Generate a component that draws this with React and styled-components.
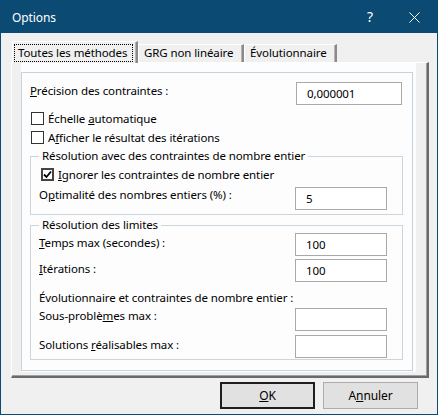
import React from "react";
import styled, { createGlobalStyle } from "styled-components";

const GlobalStyle = createGlobalStyle`
  html, body {
    margin: 0;
    padding: 0;
    background: #ffffff;
  }
  body {
    font-family: "Segoe UI", "Noto Sans", sans-serif;
    font-size: 11.5px;
    letter-spacing: -0.1px;
    color: #000;
  }
`;

const Window = styled.div`
  box-sizing: border-box;
  width: 438px;
  height: 415px;
  border: 1px solid #0b4a73;
  background: #f0f0f0;
  display: flex;
  flex-direction: column;
`;

const TitleBar = styled.div`
  height: 32px;
  background: #0b4a73;
  color: #fff;
  display: flex;
  align-items: center;
  padding-left: 11px;
  font-size: 12px;
  line-height: 16px;
`;

const Title = styled.span`
  flex: 1;
  margin-top: 1px;
`;

const TitleButton = styled.div`
  width: 46px;
  height: 32px;
  display: flex;
  align-items: center;
  justify-content: center;
  font-size: 14px;
  padding-left: ${(p) => p.$shift || 0}px;
  box-sizing: border-box;
`;

const Body = styled.div`
  padding: 8px 8px 0 10px;
  display: flex;
  flex-direction: column;
`;

const TabStrip = styled.div`
  display: flex;
  align-items: flex-end;
  height: 21px;
  padding-left: 1px;
`;

const Tab = styled.div`
  box-sizing: border-box;
  position: relative;
  z-index: ${(p) => (p.$active ? 1 : 0)};
  width: ${(p) => p.$w}px;
  height: ${(p) => (p.$active ? 22 : 18)}px;
  margin-bottom: ${(p) => (p.$active ? -1 : 0)}px;
  background: #f0f0f0;
  border-top: 1px solid #fff;
  border-left: 1px solid #fff;
  border-right: 2px solid #8a8a8a;
  box-shadow: inset -1px 0 0 #b4b4b4;
  padding: ${(p) => (p.$active ? "3px 0 0 2px" : "0 0 0 5px")};
  line-height: 16px;
  white-space: nowrap;
`;

const FocusLabel = styled.span`
  display: inline-block;
  outline: 1px dotted #000;
  outline-offset: 0;
  padding: 0 5px 0 3px;
  line-height: 16px;
`;

const Panel = styled.div`
  box-sizing: border-box;
  height: 316px;
  width: 418px;
  border-top: 1px solid #fff;
  border-left: 1px solid #fff;
  border-right: 2px solid #6a6a6a;
  border-bottom: 2px solid #6a6a6a;
  box-shadow: inset -1px -1px 0 #a0a0a0;
  padding: 0 11px 0 9px;
`;

const Frame = styled.div`
  height: 309px;
  background: #fdfdfd;
  padding: 9px 3px 1px 0;
  box-sizing: border-box;
`;

const Box = styled.div`
  box-sizing: border-box;
  height: 299px;
  border: 1px solid #c6d3de;
  display: flex;
  flex-direction: column;
`;

const FieldRow = styled.div`
  display: flex;
  align-items: flex-start;
  margin-top: ${(p) => p.$top || 0}px;
  padding-left: ${(p) => p.$left || 0}px;
  padding-right: ${(p) => p.$right || 0}px;
`;

const Label = styled.span`
  flex: 1;
  line-height: 16px;
  padding-top: ${(p) => (p.$off !== undefined ? p.$off : 2)}px;
  white-space: nowrap;
`;

const TextBox = styled.div`
  box-sizing: border-box;
  width: ${(p) => p.$w}px;
  height: 23px;
  border: 1px solid #a9a9a9;
  background: #fff;
  padding-left: 10px;
  line-height: 21px;
`;

const CheckRow = styled.div`
  display: flex;
  align-items: center;
  height: 19px;
  gap: 4px;
  padding-left: ${(p) => p.$left || 0}px;
  margin-top: ${(p) => p.$top || 0}px;
`;

const CheckBox = styled.span`
  box-sizing: border-box;
  width: 13px;
  height: 13px;
  background: #fff;
  border: ${(p) => (p.$checked ? "2px solid #444" : "1px solid #333")};
  display: flex;
  align-items: center;
  justify-content: center;
`;

const Group = styled.fieldset`
  margin: ${(p) => p.$top || 0}px 9px 0 8px;
  padding: 0 15px ${(p) => p.$bottom || 0}px 8px;
  border: 1px solid #cbd5de;
  min-width: 0;
`;

const Legend = styled.legend`
  padding: 0 3px;
  line-height: 16px;
`;

const Note = styled.div`
  line-height: 16px;
  margin-top: ${(p) => p.$top || 0}px;
`;

const Footer = styled.div`
  display: flex;
  justify-content: flex-end;
  gap: 8px;
  padding: 4px 11px 0 0;
`;

const Button = styled.div`
  box-sizing: border-box;
  width: 95px;
  height: 27px;
  background: #e1e1e1;
  border: ${(p) => (p.$default ? "2px solid #1e1e1e" : "1px solid #adadad")};
  display: flex;
  align-items: center;
  justify-content: center;
  font-size: 12px;
`;

const Check = ({ checked, children, left, top }) => (
  <CheckRow $left={left} $top={top}>
    <CheckBox $checked={checked}>
      {checked && (
        <svg width="9" height="9" viewBox="0 0 9 9">
          <path d="M1 4.5 L3.5 7 L8 1.5" fill="none" stroke="#000" strokeWidth="1.8" />
        </svg>
      )}
    </CheckBox>
    <span>{children}</span>
  </CheckRow>
);

export default function App() {
  return (
    <>
      <GlobalStyle />
      <Window>
        <TitleBar>
          <Title>Options</Title>
          <TitleButton $shift={4}>?</TitleButton>
          <TitleButton>
            <svg width="11" height="11" viewBox="0 0 11 11">
              <path d="M0.5 0.5 L10.5 10.5 M10.5 0.5 L0.5 10.5" stroke="#fff" strokeWidth="1" />
            </svg>
          </TitleButton>
        </TitleBar>
        <Body>
          <TabStrip>
            <Tab $active $w={126}>
              <FocusLabel>Toutes les méthodes</FocusLabel>
            </Tab>
            <Tab $w={106}>GRG non linéaire</Tab>
            <Tab $w={93}>Évolutionnaire</Tab>
          </TabStrip>
          <Panel>
            <Frame>
              <Box>
                <FieldRow $top={9} $left={8} $right={10}>
                  <Label $off={1}>
                    <u>P</u>récision des contraintes :
                  </Label>
                  <TextBox $w={106}>0,000001</TextBox>
                </FieldRow>
                <Check left={9} top={4}>
                  Échelle <u>a</u>utomatique
                </Check>
                <Check left={9}>
                  A<u>f</u>ficher le résultat des itérations
                </Check>
                <Group $top={1} $bottom={4}>
                  <Legend>Résolution avec des contraintes de nombre entier</Legend>
                  <Check checked left={2} top={1}>
                    <u>I</u>gnorer les contraintes de nombre entier
                  </Check>
                  <FieldRow $top={3}>
                    <Label $off={0}>
                      O<u>p</u>timalité des nombres entiers (%) :
                    </Label>
                    <TextBox $w={92}>5</TextBox>
                  </FieldRow>
                </Group>
                <Group $top={2} $bottom={1}>
                  <Legend>Résolution des limites</Legend>
                  <FieldRow>
                    <Label>
                      <u>T</u>emps max (secondes) :
                    </Label>
                    <TextBox $w={92}>100</TextBox>
                  </FieldRow>
                  <FieldRow $top={3}>
                    <Label>
                      <u>I</u>térations :
                    </Label>
                    <TextBox $w={92}>100</TextBox>
                  </FieldRow>
                  <Note $top={8}>Évolutionnaire et contraintes de nombre entier :</Note>
                  <FieldRow $top={2}>
                    <Label $off={0}>
                      Sous-problè<u>m</u>es max :
                    </Label>
                    <TextBox $w={92} />
                  </FieldRow>
                  <FieldRow $top={4}>
                    <Label>
                      Solutions <u>r</u>éalisables max :
                    </Label>
                    <TextBox $w={92} />
                  </FieldRow>
                </Group>
              </Box>
            </Frame>
          </Panel>
          <Footer>
            <Button $default>
              <span>
                <u>O</u>K
              </span>
            </Button>
            <Button>
              <span>
                A<u>n</u>nuler
              </span>
            </Button>
          </Footer>
        </Body>
      </Window>
    </>
  );
}
